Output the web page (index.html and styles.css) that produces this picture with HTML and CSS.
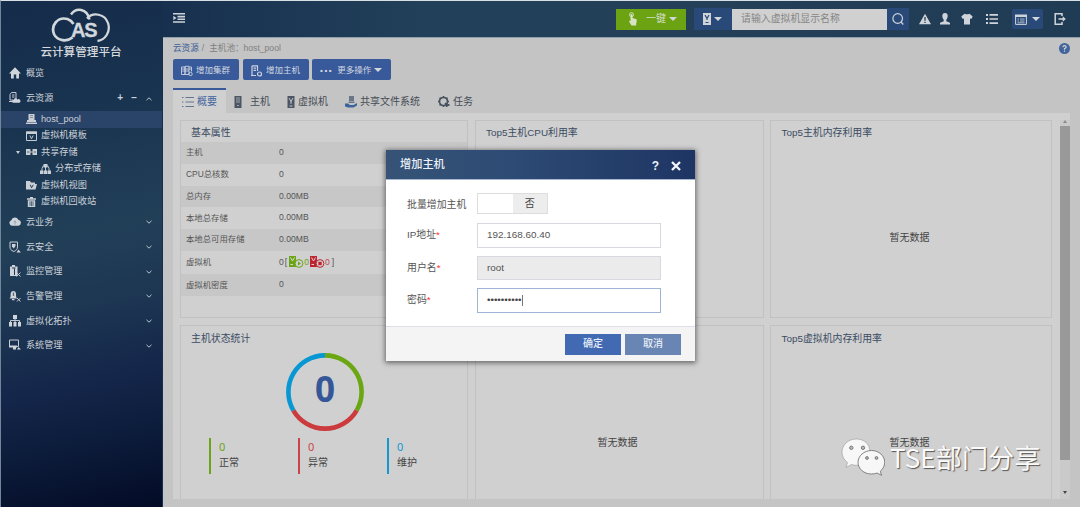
FILE: index.html
```html
<!DOCTYPE html>
<html lang="zh-CN">
<head>
<meta charset="utf-8">
<title>云计算管理平台</title>
<link rel="stylesheet" href="styles.css">
</head>
<body>
<div class="app">
  <aside class="sidebar">
    <div class="logo">
      <svg class="logo-mark" viewBox="0 0 60 36" fill="none" stroke="#d2d7dc" stroke-width="2.7">
        <path d="M21.500 29.500C16 34 6.500 33 3.200 26.500C-.8 17 7 8.500 16.500 11C19.500 12 21 13.500 22.500 16"/>
        <path d="M20 6.500C25-.5 36 0 38.500 11.500" stroke-width="2.500"/>
        <path d="M36 10.500C42 3.500 54 6 57 15C60 24 54 32 46.500 33" stroke-width="2.300"/>
        <text x="20" y="29" class="logo-text">AS</text>
      </svg>
      <div class="logo-name">云计算管理平台</div>
    </div>
    <nav>
      <div class="nav-item"><svg class="ni" viewBox="0 0 12 12"><path d="M6 .3 0 6.500H2V11.500H4.800V7.500H7.200V11.500H10V6.500H12Z"/></svg><span>概览</span></div>
      <div class="nav-item"><svg class="ni" viewBox="0 0 12 12"><path d="M2.500 .5H7V7M2.500 .5 1 2.500V8H4M3 3H5.500M3 5H5.500" class="ln"/><path d="M4 10.800a1.600 1.600 0 0 1 .5-3 2 2 0 0 1 3.800-.4A1.800 1.800 0 0 1 10.500 10.800ZM0 9H4V10H0Z"/></svg><span>云资源</span><span class="tools"><b>+</b><b>−</b><svg class="chev" viewBox="0 0 6 4"><path d="M.5 3.200 3 .8 5.500 3.200"/></svg></span></div>
      <div class="sub active"><svg class="si" viewBox="0 0 11 10"><path d="M2.500 0H8.500V6H2.500ZM1 6H10V8H1ZM0 8.500H11V10H0Z"/><path d="M4 1.500H7M4 3.500H7" stroke="#5d6f87" stroke-width=".7"/></svg><span>host_pool</span></div>
      <div class="sub"><svg class="si" viewBox="0 0 11 10"><path d="M.5 1H10.500V9.500H.5Z" class="ln"/><path d="M0 .5H11V3H0Z"/><path d="M3.800 4.500 5.500 7.800 7.200 4.500" class="ln"/></svg><span>虚拟机模板</span></div>
      <div class="sub"><i class="caret"></i><svg class="si" viewBox="0 0 11 10"><path d="M0 2H4.500V8H0ZM6.500 2H11V8H6.500ZM4 4.500H7V5.500H4Z"/><path d="M1 5H3.500M7.500 5H10" stroke="#1f3a55" stroke-width=".7"/></svg><span>共享存储</span></div>
      <div class="sub deep"><svg class="si" viewBox="0 0 11 10"><path d="M2 7V4.500A3.500 3 0 0 1 9 4.500V7M5.500 3V7" class="ln"/><path d="M3.500 0H7.500V3.500H3.500ZM0 6.500H3.500V10H0ZM4 6.500H7V10H4ZM7.500 6.500H11V10H7.500Z"/></svg><span>分布式存储</span></div>
      <div class="sub"><svg class="si" viewBox="0 0 11 10"><path d="M0 1H4L5 2.500H9V4H11L9.500 9.500H0Z"/><path d="M4.300 4.800 5.500 7.800 7.300 4.800" stroke="#213e59" fill="none"/></svg><span>虚拟机视图</span></div>
      <div class="sub"><svg class="si" viewBox="0 0 11 10"><path d="M1 1.300H10V2.700H1ZM4 0H7V1.500H4ZM1.800 3.300H9.200V10H1.800Z"/><path d="M4 4.300V9M5.500 4.300V9M7 4.300V9" stroke="#213e59" stroke-width=".7"/></svg><span>虚拟机回收站</span></div>
      <div class="nav-item low"><svg class="ni" viewBox="0 0 12 12"><path d="M3 9.800A2.900 2.900 0 0 1 2.300 4.200 3.800 3.800 0 0 1 9.300 3.700 3.100 3.100 0 0 1 9.500 9.800Z"/><path d="M6 8.500V5M4.700 6 6 4.800 7.300 6" stroke="#8695a3" fill="none" stroke-width=".8"/></svg><span>云业务</span><svg class="chev" viewBox="0 0 6 4"><path d="M.5 .8 3 3.200 5.500 .8"/></svg></div>
      <div class="nav-item low"><svg class="ni" viewBox="0 0 12 12"><path d="M1 1H8.500V6C8.500 8.500 7 9.500 4.800 10.500 2 9.500 1 8 1 6Z" class="ln"/><path d="M3 3H6.500V5L4.800 7.500 3 5.500Z"/><path d="M7.500 11.500 9.500 8.500 11.800 11.500Z"/></svg><span>云安全</span><svg class="chev" viewBox="0 0 6 4"><path d="M.5 .8 3 3.200 5.500 .8"/></svg></div>
      <div class="nav-item low"><svg class="ni" viewBox="0 0 12 12"><path d="M1 1.500H3V0H6V1.500H8.500V11H1Z"/><path d="M5.500 3.500V10M3 3H6.500" stroke="#20354e"/><path d="M7.500 7.500 11.500 11.500M11.500 7.500 7.500 11.500" class="ln"/></svg><span>监控管理</span><svg class="chev" viewBox="0 0 6 4"><path d="M.5 .8 3 3.200 5.500 .8"/></svg></div>
      <div class="nav-item low"><svg class="ni" viewBox="0 0 12 12"><path d="M.5 8.500C2 7 1.500 6 1.700 3.200A2.700 2.700 0 0 1 7 3.200C7 6 7 7 8 8.500ZM3 9H5.500V10.300H3Z"/><path d="M4.500 2.500V6" stroke="#596a7d" stroke-width="1.300"/><path d="M8 8 11.500 11.500M11.500 8 8 11.500" class="ln"/></svg><span>告警管理</span><svg class="chev" viewBox="0 0 6 4"><path d="M.5 .8 3 3.200 5.500 .8"/></svg></div>
      <div class="nav-item low"><svg class="ni" viewBox="0 0 12 12"><path d="M4 0H8V4H4ZM0 7H3V11.500H0ZM4.500 7H7.500V11.500H4.500ZM9 7H12V11.500H9Z"/><path d="M1.500 7V5.500H10.500V7M6 4V7" class="ln"/></svg><span>虚拟化拓扑</span><svg class="chev" viewBox="0 0 6 4"><path d="M.5 .8 3 3.200 5.500 .8"/></svg></div>
      <div class="nav-item low"><svg class="ni" viewBox="0 0 12 12"><path d="M.5 1H9.500V7.500H.5Z" class="ln"/><path d="M0 6.500H8V8.500H0ZM4 8H7V10.500H4ZM8 10.500 9.500 8 12 10.500Z"/></svg><span>系统管理</span><svg class="chev" viewBox="0 0 6 4"><path d="M.5 .8 3 3.200 5.500 .8"/></svg></div>
    </nav>
  </aside>

  <div class="right">
    <header class="topbar">
      <svg class="fold" viewBox="0 0 12 10"><path d="M0 .8H12M4.500 3.600H12M4.500 6.200H12M0 9H12" stroke="#cdd3d8" stroke-width="1.600"/><path d="M.3 3.500V2.800L3.500 5 .3 7.200" fill="#cdd3d8"/></svg>
      <div class="onekey"><svg viewBox="0 0 10 14"><circle cx="3.500" cy="2.700" r="2" fill="none" stroke="#d8e3c3" stroke-width=".9"/><path d="M2.500 2.500Q3.500 1.700 4.500 2.500V6L8.500 7.200Q9.400 9.500 8.200 11.500V13.500H3.500L1 9.500Q1.200 8.200 2.500 9Z" fill="#d8e3c3"/></svg><span>一键</span><i class="tri"></i></div>
      <div class="vmpick"><svg viewBox="0 0 8 12"><path d="M0 0H8V12H0Z" fill="#d0d3d8"/><path d="M2 2 4 5.500 6 2M4 5V7M2.500 9.500H5.500" stroke="#294a78" stroke-width="1.200" fill="none"/></svg><i class="tri"></i></div>
      <div class="search">请输入虚拟机显示名称</div>
      <div class="go"><svg viewBox="0 0 12 12" fill="none" stroke="#cfd4db" stroke-width="1.200"><circle cx="5.700" cy="5.500" r="4.800"/><path d="M9 9 11.300 11.500"/></svg></div>
      <div class="icons">
        <svg viewBox="0 0 12 12"><path d="M6 .8 12 11.200H0Z"/><path d="M6 4V7.800M6 8.700V10" stroke="#244058" stroke-width="1.300"/></svg>
        <svg viewBox="0 0 12 12"><path d="M3.300 3A2.700 2.900 0 0 1 8.700 3Q8.700 5.500 7.300 6.800V8.200L11 9.800V11.500H1V9.800L4.700 8.200V6.800Q3.300 5.500 3.300 3Z"/></svg>
        <svg viewBox="0 0 12 12"><path d="M3.500.7Q6 2 8.500.7L11.700 3.500 10.300 6 9 5.400V11.500H3V5.400L1.700 6 .3 3.500Z"/></svg>
        <svg viewBox="0 0 12 12"><path d="M0 1H2V3H0ZM3.500 1H12V2.700H3.500ZM0 5H2V7H0ZM3.500 5.200H12V6.800H3.500ZM0 9H2V11H0ZM3.500 9.300H12V11H3.500Z"/></svg>
      </div>
      <div class="calendar"><svg viewBox="0 0 12 11"><path d="M.6 1.500H11.400V10.400H.6Z" fill="none" stroke="#cfd4db"/><path d="M0 .5H12V3H0Z" fill="#cfd4db"/><path d="M2.500 5H4M5 5H9.500M2.500 7H4M5 7H9.500M2.500 8.800H9.500" stroke="#cfd4db" stroke-width=".8"/></svg><i class="tri"></i></div>
      <svg class="logout" viewBox="0 0 12 12"><path d="M8 3V.8H1.200V11.200H8V9M4.500 6H10" fill="none" stroke="#cfd4db" stroke-width="1.500"/><path d="M8.700 3.300 11.800 6 8.700 8.700Z" fill="#cfd4db"/></svg>
    </header>

    <main class="main">
      <div class="crumb"><a>云资源</a><i>/</i><span>主机池：host_pool</span><svg class="help" viewBox="0 0 11 11"><circle cx="5.500" cy="5.500" r="5.500" fill="#41649c"/><path d="M3.800 4.200Q4 2.700 5.500 2.700 7.200 2.700 7.200 4.100 7.200 5 5.500 5.600V6.700M5.500 7.500V8.800" fill="none" stroke="#d0d0d0" stroke-width="1.200"/></svg></div>
      <div class="actions">
        <div class="act"><svg viewBox="0 0 12 11" fill="none" stroke="#ccd2df" stroke-width=".9"><path d="M.5 1.500H4V9H.5ZM4 .8H8V9H4ZM8 1.500H10.500V6M1.200 3.500H10M1.200 5.500H8"/><circle cx="9.500" cy="8.500" r="1.700"/></svg><span>增加集群</span></div>
        <div class="act"><svg viewBox="0 0 12 12" fill="none" stroke="#ccd2df" stroke-width="1.200"><path d="M1 .8H6.500V6M1 .8V10M2.500 3.200H5M2.500 5.300H5M0 10.500H5"/><circle cx="8.500" cy="9" r="2"/></svg><span>增加主机</span></div>
        <div class="act more"><b>•••</b><span>更多操作</span><i class="tri"></i></div>
      </div>
      <div class="tabs">
        <div class="tab on"><svg viewBox="0 0 12 12"><path d="M0 1.500H1.500M3.500 1.500H12M0 6H1.500M3.500 6H12M0 10.500H1.500M3.500 10.500H12" stroke="#64758f" stroke-width="1.100"/></svg><span>概要</span></div>
        <div class="tab t2"><svg viewBox="0 0 8 12"><path d="M.5 0H7.500V12H.5Z" fill="#4b5563"/><path d="M2 2H6M2 4H6M2 6H6M3 9.500H5" stroke="#b9bdc2" stroke-width=".8"/></svg><span>主机</span></div>
        <div class="tab t3"><svg viewBox="0 0 8 12"><path d="M.5 0H7.500V12H.5Z" fill="#4b5563"/><path d="M2 2 4 5.500 6 2M4 5V8M2.500 10H5.500" stroke="#c3c5c8" fill="none"/></svg><span>虚拟机</span></div>
        <div class="tab t4"><svg viewBox="0 0 12 12"><path d="M4 0H9V5H4ZM3.500 5.500H9.500V7H3.500Z" fill="#6a7788"/><path d="M0 7.500H3L5 9H8.500L12 7V9.500L8.500 11.500H3L0 10.500Z" fill="#3b639d"/></svg><span>共享文件系统</span></div>
        <div class="tab t5"><svg viewBox="0 0 12 12" fill="none" stroke="#46515e"><circle cx="5.500" cy="5.500" r="4" stroke-width="1.700"/><path d="M5.500 0V2M5.500 9V11M0 5.500H2M9 5.500H11M1.600 1.600 3 3M8 3 9.500 1.600M1.600 9.500 3 8" stroke-width="1.500"/><path d="M7 7 8.500 11 10 9.500 11.500 9Z" fill="#46515e"/></svg><span>任务</span></div>
      </div>
      <div class="content">
        <div class="grid">
          <section class="panel props">
            <h3>基本属性</h3>
            <dl><dt>主机</dt><dd>0</dd></dl>
            <dl><dt>CPU总核数</dt><dd>0</dd></dl>
            <dl><dt>总内存</dt><dd>0.00MB</dd></dl>
            <dl><dt>本地总存储</dt><dd>0.00MB</dd></dl>
            <dl><dt>本地总可用存储</dt><dd>0.00MB</dd></dl>
            <dl class="tall"><dt>虚拟机</dt><dd><span class="br">0[</span>
              <svg class="vmi" viewBox="0 0 15 12"><path d="M0 0H7V11H0Z" fill="#6ba517"/><path d="M1.500 1.500 3.500 5 5.500 1.500M1.500 8.500H4" stroke="#d6dec8" fill="none"/><circle cx="10" cy="7.500" r="3.900" fill="#d0d0d0" stroke="#6ba517"/><path d="M9 5.500 12 7.500 9 9.500Z" fill="#6ba517"/></svg><span class="g">0</span>
              <svg class="vmi" viewBox="0 0 15 12"><path d="M0 0H7V11H0Z" fill="#bd2630"/><path d="M1.500 1.500 3.500 5 5.500 1.500M1.500 8.500H4" stroke="#decccc" fill="none"/><circle cx="10" cy="7.500" r="3.900" fill="#d0d0d0" stroke="#bd2630"/><path d="M8.300 5.800H11.700V9.200H8.300Z" fill="#bd2630"/></svg><span class="r">0</span><span class="end">]</span></dd></dl>
            <dl><dt>虚拟机密度</dt><dd>0</dd></dl>
          </section>
          <section class="panel"><h3>Top5主机CPU利用率</h3></section>
          <section class="panel"><h3>Top5主机内存利用率</h3><p class="none">暂无数据</p></section>
          <section class="panel">
            <h3>主机状态统计</h3>
            <svg class="donut" viewBox="0 0 80 80" fill="none" stroke-width="4.600"><path d="M40 3.400A36.600 36.600 0 0 1 71.700 58.300" stroke="#6ba712"/><path d="M71.700 58.300A36.600 36.600 0 0 1 8.300 58.300" stroke="#cb3a3c"/><path d="M8.300 58.300A36.600 36.600 0 0 1 40 3.400" stroke="#0797d3"/><text x="40" y="49.500" text-anchor="middle">0</text></svg>
            <div class="stats"><div class="g"><b>0</b><span>正常</span></div><div class="r"><b>0</b><span>异常</span></div><div class="bl"><b>0</b><span>维护</span></div></div>
          </section>
          <section class="panel"><p class="none">暂无数据</p></section>
          <section class="panel"><h3>Top5虚拟机内存利用率</h3><p class="none">暂无数据</p></section>
        </div>
        <div class="scroll"><i class="up"></i><div class="thumb"></div><i class="down"></i></div>
      </div>
    </main>
  </div>
</div>

<div class="dialog">
  <div class="dlg-head"><span>增加主机</span><b>?</b><svg viewBox="0 0 10 10"><path d="M1 1 9 9M9 1 1 9" stroke="#f2f5fa" stroke-width="2.300"/></svg></div>
  <div class="dlg-body">
    <div class="field sw"><label>批量增加主机</label><div class="switch"><span></span><span>否</span></div></div>
    <div class="field"><label>IP地址<em>*</em></label><div class="input">192.168.60.40</div></div>
    <div class="field"><label>用户名<em>*</em></label><div class="input off">root</div></div>
    <div class="field"><label>密码<em>*</em></label><div class="input focus"><span class="dots">••••••••••</span><i></i></div></div>
  </div>
  <div class="dlg-foot"><div class="btn">确定</div><div class="btn cancel">取消</div></div>
</div>

<div class="watermark">
  <svg viewBox="0 0 44 38"><path d="M15.500 1C7 1 1 7 1 14.300 1 18.500 3.200 22 6.500 24.500L5 29.500 10.500 26.500Q13 27.500 17 27.300L29 14C29 6.500 23.500 1 15.500 1Z" fill="#f7f7f7" stroke="#999" stroke-width=".6"/><path d="M30.500 12.500C23 12.500 17 18 17 24.300 17 31 23 36 30.500 36Q33.500 36 36 35L40.500 37.300 39.300 33.200C42 31 43.700 28 43.700 24.300 43.700 18 38 12.500 30.500 12.500Z" fill="#f7f7f7" stroke="#777" stroke-width=".9"/><g fill="#b9b9b9" stroke="#666" stroke-width=".8"><circle cx="10.300" cy="9.800" r="1.700"/><circle cx="22" cy="9.800" r="1.700"/><circle cx="26" cy="20" r="1.400"/><circle cx="35.500" cy="20" r="1.400"/></g></svg>
  <span>TSE部门分享</span>
</div>
</body>
</html>
```
FILE: styles.css
```css
* { box-sizing: border-box; }
body { margin: 0; width: 1080px; height: 507px; overflow: hidden; position: relative; font-family: "Liberation Sans", "Noto Sans CJK SC", sans-serif; font-size: 10px; line-height: 1.2; color: #444; }
h3, p, dl, dt, dd { margin: 0; font-weight: 400; }
i, em { font-style: normal; }
svg { display: block; flex: none; }
.app { display: flex; height: 507px; border-top: 1px solid #d9e0e5; border-left: 1px solid #71869a; background: #17304f; }

.sidebar { width: 162px; flex: none; background: linear-gradient(168deg, #152c4a 0%, #18334f 22%, #223f58 46%, #1d3652 60%, #14264a 74%, #0b1a38 87%, #030b26 100%); border-right: 1px solid #172f4d; color: #ccd2d9; }
.logo { height: 60px; padding: 7px 1px 0 0; display: flex; flex-direction: column; align-items: center; }
.logo-mark { width: 60px; height: 36px; }
.logo-text { font: bold 20px "Liberation Sans", sans-serif; fill: #d2d7dc; stroke: #d2d7dc; stroke-width: .3px; letter-spacing: -1.200px; }
.logo-name { font-size: 11.600px; line-height: 16px; font-weight: 500; color: #d6dade; white-space: nowrap; }
.nav-item { display: flex; align-items: center; height: 25px; padding: 0 10px 0 8px; font-size: 9.100px; }
.nav-item.low { height: 24.700px; }
.ni { width: 12px; height: 12px; margin: -1px 5px 0 0; fill: #cfd4da; }
.ni .ln, .si .ln { fill: none; stroke: #c5cbd2; stroke-width: 1; }
.nav-item > .chev { margin-left: auto; }
.chev { width: 6px; height: 4px; fill: none; stroke: #bdc6ce; stroke-width: 1; }
.tools { margin-left: auto; display: flex; align-items: center; gap: 9px; }
.tools b { font-size: 10px; line-height: 10px; margin-top: -2px; }
.tools b:first-child { margin-right: -1px; }
.sub { display: flex; align-items: center; height: 16.500px; padding-left: 25px; font-size: 9.200px; }
.sub.deep { padding-left: 39px; }
.sub.active { background: #2a4369; }
.si { width: 11px; height: 10px; margin-right: 4px; fill: #c9cfd5; }
.caret { margin: 0 5px 0 -10px; border: 2.500px solid transparent; border-top: 3px solid #c9cfd5; border-bottom: 0; }
.caret + .si { margin-left: 1px; }

.right { flex: 1; min-width: 0; }
.topbar { height: 36px; display: flex; align-items: center; padding-left: 10px; background: linear-gradient(90deg, #17304f 0, #22405a 28%, #244058 60%, #203c54 100%); }
.fold { width: 12px; height: 10px; margin: -2px 431px 0 0; }
.tri { width: 0; height: 0; border: 4px solid transparent; border-top: 4.500px solid #d3d7dc; border-bottom: 0; }
.onekey { width: 70px; height: 21px; background: #6ba312; display: flex; align-items: center; padding-left: 12px; color: #d5dec9; font-size: 10px; margin-right: 8px; }
.onekey svg { width: 10px; height: 14px; margin-right: 8px; }
.onekey .tri { margin-left: 3px; }
.vmpick { width: 38px; height: 22px; background: #294a78; display: flex; align-items: center; padding-left: 9px; gap: 3px; }
.vmpick svg { width: 8px; height: 12px; }
.search { width: 155px; height: 21px; line-height: 19px; background: #d0d0d0; color: #858585; font-size: 9.900px; padding-left: 9px; }
.go { width: 22px; height: 22px; background: #294a78; display: flex; align-items: center; justify-content: center; }
.go svg { width: 12px; height: 12px; }
.icons { display: flex; margin-left: 10px; fill: #cfd4db; }
.icons svg { width: 12px; height: 12px; margin-right: 8px; }
.icons svg:nth-child(3) { margin: 0 13px 0 2px; }
.icons svg:nth-child(4) { margin-right: 14px; }
.calendar { width: 31px; height: 20px; background: #294a78; border-radius: 2px; display: flex; align-items: center; padding-left: 3px; gap: 5px; }
.calendar svg { width: 12px; height: 11px; }
.logout { width: 12px; height: 12px; margin-left: 11px; }

.main { height: 470px; background: #c4c4c4; border-top: 1px solid #8fa0aa; padding: 0 10px 8px; }
.crumb { height: 21px; display: flex; align-items: center; font-size: 8.600px; color: #808080; }
.crumb a { color: #3d5e98; }
.crumb i { margin: 0 5px 0 3px; }
.help { width: 11px; height: 11px; margin-left: auto; }
.actions { display: flex; height: 21px; }
.act { width: 66px; margin-right: 4px; border-radius: 2px; background: #385a9a; color: #d3d8e2; display: flex; align-items: center; font-size: 8.500px; padding: 2px 0 0 8px; }
.act svg { width: 12px; height: 12px; margin-right: 3px; }
.act.more { width: 79px; margin-left: -1px; }
.act.more b { font-size: 8px; letter-spacing: 1.600px; margin-right: 4px; }
.act .tri { margin: -2px 0 0 3px; }
.tabs { display: flex; height: 25px; margin-top: 8px; }
.tab { display: flex; align-items: center; height: 28px; font-size: 10px; color: #444c55; }
.tab svg { width: 12px; height: 12px; margin-right: 3px; }
.tab.on { width: 53px; height: 26px; padding-left: 9px; background: #d0d0d0; border-top: 2px solid #385a9a; color: #41639e; }
.t2 svg, .t3 svg { width: 8px; }
.t2 { margin-left: 8px; }
.t2 svg { margin-right: 8px; }
.t3 { margin-left: 17px; }
.t4 { margin-left: 17px; }
.t5 { margin-left: 18px; }

.content { height: 386px; background: #d0d0d0; display: flex; padding: 7px 0 0 7px; overflow: hidden; }
.grid { display: grid; grid-template-columns: 288px 289px 282px; grid-template-rows: 198px 190px; gap: 6.500px; flex: none; }
.panel { border: 1px solid #c1c1c1; display: flex; flex-direction: column; }
.panel h3 { height: 21px; padding: 0 0 0 10.500px; line-height: 24px; font-size: 9.900px; color: #3b4c63; flex: none; }
.panel:nth-child(1) h3, .panel:nth-child(4) h3 { padding-left: 10px; }
.panel:nth-child(n+4) h3 { line-height: 26px; }
.none { text-align: center; margin-top: 88.500px; line-height: 14px; font-size: 10px; color: #444; padding-right: 3px; }
.panel:nth-child(5) .none { margin-top: 110px; }
.panel:nth-child(6) .none { margin-top: 89px; }
dl { display: flex; align-items: center; height: 21.800px; padding: 0 0 1.500px 5px; font-size: 8.400px; color: #555; }
dl:nth-of-type(odd) { background: #c7c7c7; }
dl.tall { height: 23.500px; }
dt { width: 93px; }
dd { display: flex; align-items: center; white-space: nowrap; font-size: 8.600px; }
.br { letter-spacing: 1px; }
.end { margin-left: 2px; }
.vmi { width: 15px; height: 12px; margin-left: 1px; }
dd .g { color: #6ba517; }
dd .r { color: #c6474d; }
.donut { width: 80px; height: 80px; margin: 5.500px 0 0 103.500px; }
.donut text { font: bold 35px "Noto Sans", sans-serif; fill: #365797; stroke: none; }
.stats { display: flex; margin: 6px 0 0 28px; }
.stats div { width: 89px; flex: none; height: 36px; border-left: 2.500px solid; padding-left: 8px; display: flex; flex-direction: column; }
.stats div:last-child { width: 60px; }
.stats b { font: 11px/17px "Noto Sans", sans-serif; }
.stats span { color: #444; line-height: 16px; }
.stats .g { color: #6ba517; }
.stats .r { color: #cb4547; }
.stats .bl { color: #1498cf; }
.scroll { width: 10px; margin-left: auto; padding: 0 0 5px; display: flex; flex-direction: column; align-items: center; background: #cacaca; flex: none; }
.thumb { width: 10px; height: 334px; background: #999; margin: 3px 0 auto; }
.up, .down { border: 2.500px solid transparent; }
.up { border-top: 0; border-bottom: 3px solid #8a8a8a; }
.down { border-bottom: 0; border-top: 3px solid #444; }

.dialog { position: absolute; left: 386px; top: 150px; width: 309px; height: 211px; background: #fff; box-shadow: 0 1px 5px 1px rgba(0,0,0,.5); }
.dlg-head { height: 30px; display: flex; align-items: center; padding: 0 14px; background: linear-gradient(90deg, #365377, #2d4b74 40%, #1e3563); border-bottom: 1px solid #a9b7d0; color: #edf1f7; font-size: 11.200px; font-weight: 500; }
.dlg-head b { margin: 3px 12px 0 auto; font-size: 12px; }
.dlg-head svg { width: 10px; height: 10px; margin-top: 3px; }
.dlg-body { height: 147px; padding: 13px 21px 0; border-bottom: 1px solid #dcdfea; }
.field { display: flex; align-items: center; height: 24.500px; margin-bottom: 8px; }
.field.sw { height: 21px; margin-bottom: 9px; }
.field label { width: 70px; font-size: 9.900px; color: #555; white-space: nowrap; }
.sw label { padding-top: 2px; }
.field em { color: #f33; }
.switch { width: 71px; height: 21px; border: 1px solid #ddd; display: flex; line-height: 19px; text-align: center; font-size: 10px; color: #444; }
.switch span { flex: 1; }
.switch span + span { background: #ededed; }
.input { width: 184px; height: 24.500px; border: 1px solid #d8d9e0; padding-left: 9px; display: flex; align-items: center; font-size: 9.900px; color: #555; }
.off { background: #ebebeb; }
.focus { border-color: #a0b4d6; }
.focus i { width: 1px; height: 11px; background: #777; }
.dots { color: #444; }
.dlg-foot { height: 34px; background: #f4f4f4; display: flex; justify-content: flex-end; align-items: center; padding: 0 14px; gap: 4px; }
.btn { width: 56px; height: 21px; background: #416ab3; color: #e8edf6; text-align: center; line-height: 20px; font-size: 10px; font-weight: 500; }
.cancel { background: #6885b3; }

.watermark { position: absolute; left: 841px; top: 437px; display: flex; align-items: center; color: #fafafa; font: 400 26px/40px "Noto Sans CJK SC", sans-serif; text-shadow: 1px 1px 1px #555; white-space: nowrap; }
.watermark svg { width: 44px; height: 38px; margin-right: 5px; }
.watermark span { letter-spacing: .2px; }
```
